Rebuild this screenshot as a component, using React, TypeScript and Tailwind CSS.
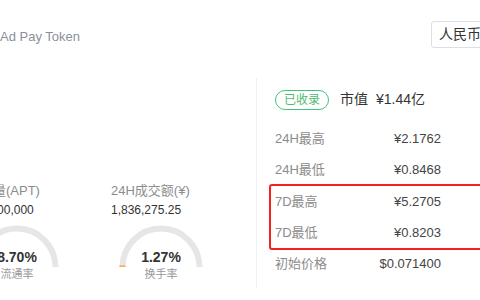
import React from "react";

function Gauge({ value, label, pct }: { value: string; label: string; pct: number }) {
  const cx = 45;
  const cy = 45;
  const r = 38.5;
  const ang = Math.PI - (pct / 100) * Math.PI;
  const ex = cx + r * Math.cos(ang);
  const ey = cy - r * Math.sin(ang);
  return (
    <div className="relative w-[90px] h-[60px]">
      <svg width="90" height="48" viewBox="0 0 90 48" className="block">
        <path
          d={`M ${cx - r} ${cy} A ${r} ${r} 0 0 1 ${cx + r} ${cy}`}
          fill="none"
          stroke="#e6e6e6"
          strokeWidth="6"
        />
        <path
          d={`M ${cx - r} ${cy} A ${r} ${r} 0 0 1 ${ex} ${ey}`}
          fill="none"
          stroke="#f5b041"
          strokeWidth="6"
        />
      </svg>
      <div className="absolute inset-x-0 top-[27px] flex flex-col items-center">
        <div className="text-[14px] leading-[16px] font-bold text-[#333]">{value}</div>
        <div className="mt-[1px] text-[11px] leading-[16px] text-[#999]">{label}</div>
      </div>
    </div>
  );
}

function Row({ label, value, h = "h-[31px]" }: { label: string; value: string; h?: string }) {
  return (
    <div className={`flex w-[166px] items-center justify-between ${h}`}>
      <span className="text-[13px] text-[#8c8c8c]">{label}</span>
      <span className="text-[13px] text-[#444]">{value}</span>
    </div>
  );
}

export default function App() {
  return (
    <div className="relative w-[480px] h-[300px] overflow-hidden bg-white font-['Liberation_Sans','Noto_Sans_CJK_SC',sans-serif]">
      <div className="flex items-start justify-between pt-[21px] h-[48px]">
        <div className="mt-[7px] text-[13px] leading-[18px] text-[#8a909b]">Ad Pay Token</div>
        <div className="ml-auto -mr-[12px] flex h-[27px] w-[61px] items-center rounded-[3px] border border-[#dcdfe6] pl-[7px] text-[14px] text-[#333]">
          人民币
        </div>
      </div>
      <div className="mt-[30px] flex">
        <div className="w-[256px] shrink-0 pt-[104px]">
          <div className="-ml-[33px] flex">
            <div className="w-[144px] shrink-0">
              <div className="text-[13px] leading-[18px] text-[#8c8c8c]">流通量(APT)</div>
              <div className="mt-[1px] text-[12px] leading-[18px] text-[#333]">100,000,000</div>
              <div className="mt-[3px] ml-[5px]">
                <Gauge value="8.70%" label="流通率" pct={8.7} />
              </div>
            </div>
            <div className="w-[140px] shrink-0">
              <div className="text-[13px] leading-[18px] text-[#8c8c8c]">24H成交额(¥)</div>
              <div className="mt-[1px] text-[12px] leading-[18px] text-[#333]">1,836,275.25</div>
              <div className="mt-[3px] ml-[5px]">
                <Gauge value="1.27%" label="换手率" pct={1.27} />
              </div>
            </div>
          </div>
        </div>
        <div className="h-[210px] shrink-0 border-l border-[#eef0f4] pl-[18px] pt-[11px]">
          <div className="flex items-center">
            <div className="flex h-[20px] w-[54px] items-center justify-center rounded-full border border-[#3cc47c] text-[12px] text-[#52b96e]">
              已收录
            </div>
            <span className="ml-[11px] text-[14px] text-[#333]">市值</span>
            <span className="ml-[8px] text-[14px] text-[#333]">¥1.44亿</span>
          </div>
          <div className="mt-[13px]">
            <Row label="24H最高" value="¥2.1762" />
            <Row label="24H最低" value="¥0.8468" />
          </div>
          <div className="-ml-[6px] -mt-[1px] w-[230px] rounded-[3px] border-2 border-[#f52020] pl-[4px]">
            <Row label="7D最高" value="¥5.2705" />
            <Row label="7D最低" value="¥0.8203" />
          </div>
          <Row label="初始价格" value="$0.071400" h="h-[28px]" />
        </div>
      </div>
    </div>
  );
}
